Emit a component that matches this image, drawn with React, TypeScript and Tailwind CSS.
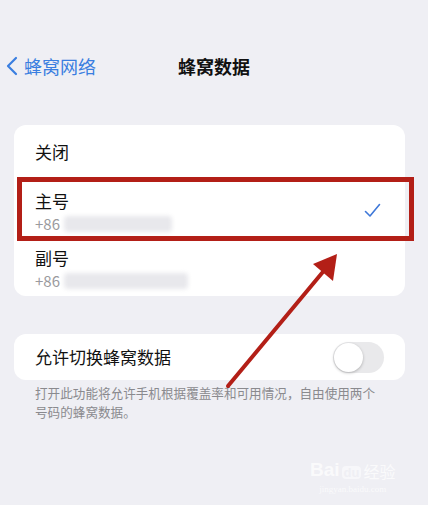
import React from "react";

const font = { fontFamily: '"Noto Sans CJK SC", "Noto Sans", sans-serif' };

// blurred-out phone number after the country code
function HiddenNumber({ width }: { width: number }) {
  return (
    <span
      className="ml-1 inline-block h-[16px] rounded-sm bg-[#e8e8ec] blur-[2px]"
      style={{ width }}
    />
  );
}

function SimRow({ name, width, checked, tall }: { name: string; width: number; checked?: boolean; tall?: boolean }) {
  return (
    <div className={`flex items-start justify-between pl-[21px] pr-[24px] pt-[8px] ${tall ? "h-[60px]" : "h-[57px]"}`}>
      <div className="flex flex-col">
        <span className="text-[17px] leading-[28px] text-[#111]">{name}</span>
        <span className="flex items-center text-[15px] leading-[18px] text-[#9a9a9e]">
          +86
          <HiddenNumber width={width} />
        </span>
      </div>
      {checked && (
        <svg width="17" height="15" viewBox="0 0 17 15" className="mt-[16px]">
          <path d="M1.5 8.5 L6 13 L15.5 1.5" fill="none" stroke="#3f78d8" strokeWidth="1.6" strokeLinecap="round" strokeLinejoin="round" />
        </svg>
      )}
    </div>
  );
}

export default function App() {
  return (
    <div className="relative h-[505px] w-[428px] overflow-hidden bg-[#efeff4]" style={font}>
      {/* nav bar */}
      <div className="h-[125px] pt-[54px]">
        <div className="relative flex h-[24px] items-center">
          <div className="flex items-center gap-[6px] pl-[6px]">
            <svg width="12" height="20" viewBox="0 0 12 20">
              <path d="M10 2 L2 10 L10 18" fill="none" stroke="#3a7ee0" strokeWidth="2.2" strokeLinecap="round" strokeLinejoin="round" />
            </svg>
            <span className="text-[18px] leading-[24px] text-[#3a7ee0]">蜂窝网络</span>
          </div>
          <span className="absolute left-1/2 top-0 -translate-x-1/2 text-[18px] font-bold leading-[24px] text-[#111]">
            蜂窝数据
          </span>
        </div>
      </div>

      {/* sim selection */}
      <div className="relative mx-[14px] w-[391px] rounded-[12px] bg-white">
        <div className="flex h-[54px] items-center pl-[21px] text-[17px] text-[#111]">关闭</div>
        <SimRow name="主号" width={108} checked />
        <SimRow name="副号" width={124} tall />
        {/* highlight frame */}
        <div className="absolute left-[3px] top-[52px] h-[64px] w-[397px] border-[5px] border-[#b31f17]" />
      </div>

      {/* switching option */}
      <div className="mx-[14px] mt-[38px] flex h-[46px] w-[391px] items-center justify-between rounded-[12px] bg-white pl-[21px] pr-[21px]">
        <span className="text-[17px] text-[#111]">允许切换蜂窝数据</span>
        <div className="flex h-[31px] w-[51px] items-center rounded-full bg-[#e9e9eb] p-[1px]">
          <div className="h-[29px] w-[29px] rounded-full bg-white shadow-[0_1px_3px_rgba(0,0,0,0.25)]" />
        </div>
      </div>
      <div className="mt-[4px] flex flex-col pl-[35px] text-[12.6px] leading-[18.5px] text-[#8a8a8e]">
        <span>打开此功能将允许手机根据覆盖率和可用情况，自由使用两个</span>
        <span>号码的蜂窝数据。</span>
      </div>

      {/* annotation arrow */}
      <svg className="pointer-events-none absolute inset-0" width="428" height="505" viewBox="0 0 428 505">
        <line x1="228" y1="386" x2="332" y2="261" stroke="#b31f17" strokeWidth="4" strokeLinecap="round" />
        <path d="M337 254 L313 264 L333 281 Z" fill="#b31f17" />
      </svg>

      {/* watermark */}
      <div className="absolute left-[310px] top-[460px] flex flex-col items-center text-white/70">
        <div className="flex items-end gap-[2px] text-[19px] font-bold leading-none" style={{ fontFamily: '"Liberation Sans", sans-serif' }}>
          <span>Bai</span>
          <span className="rounded-[4px] bg-white/50 px-[2px] text-[13px] text-[#efeff4]">du</span>
          <span className="text-[16px] font-normal" style={font}>经验</span>
        </div>
        <span className="mt-[6px] text-[9px] leading-none" style={{ fontFamily: '"Liberation Serif", serif' }}>
          jingyan.baidu.com
        </span>
      </div>
    </div>
  );
}
